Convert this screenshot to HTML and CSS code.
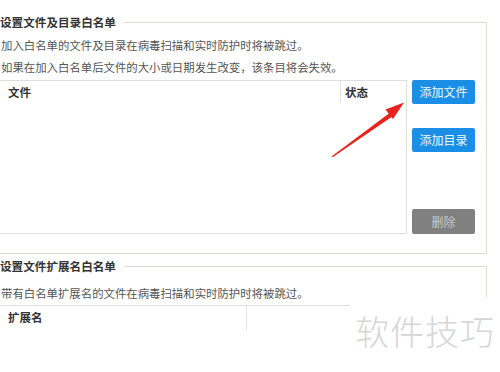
FILE: index.html
```html
<!DOCTYPE html>
<html lang="zh-CN">
<head>
<meta charset="utf-8">
<link rel="stylesheet" href="styles.css">
</head>
<body>
<div class="page">
  <fieldset class="group group-dirs">
    <legend class="legend">设置文件及目录白名单</legend>
    <p class="desc">加入白名单的文件及目录在病毒扫描和实时防护时将被跳过。</p>
    <p class="desc">如果在加入白名单后文件的大小或日期发生改变，该条目将会失效。</p>
    <div class="list-row">
      <div class="table table-dirs">
        <div class="thead">
          <div class="th th-file">文件</div>
          <div class="th th-state">状态</div>
        </div>
      </div>
      <div class="actions">
        <button class="btn btn-blue">添加文件</button>
        <button class="btn btn-blue">添加目录</button>
        <button class="btn btn-gray">删除</button>
      </div>
    </div>
  </fieldset>

  <fieldset class="group group-ext">
    <legend class="legend">设置文件扩展名白名单</legend>
    <p class="desc desc-ext">带有白名单扩展名的文件在病毒扫描和实时防护时将被跳过。</p>
    <div class="table table-ext">
      <div class="thead">
        <div class="th th-ext">扩展名</div>
        <div class="th th-rest"></div>
      </div>
    </div>
  </fieldset>

  <div class="watermark">软件技巧</div>

  <svg class="arrow" width="500" height="372" viewBox="0 0 500 372">
    <polygon points="331.5,156.5 333,157 393.4,115.8 390.6,112.2" fill="#e8221c"/>
    <polygon points="404,102.5 385.5,109.5 393,119" fill="#e8221c"/>
  </svg>
</div>
</body>
</html>
```

FILE: styles.css
```css
* { box-sizing: border-box; }

html, body {
  margin: 0;
  padding: 0;
  background: #ffffff;
}

body {
  font-family: "Noto Sans CJK SC", "Microsoft YaHei", sans-serif;
  color: #555;
  overflow: hidden;
}

.page {
  position: relative;
  width: 500px;
  height: 372px;
  overflow: hidden;
}

.group {
  margin: 0 13px 0 -10px;
  padding: 0;
  border: 1px solid #dcdcd6;
  min-width: 0;
}

.group-dirs {
  margin-top: 14px;
  padding-bottom: 19px;
}

.group-ext {
  margin-top: 4px;
  height: 160px;
}

.legend {
  margin-left: 9px;
  padding: 0 8px 0 0;
  font-size: 11.6px;
  line-height: 16px;
  font-weight: 700;
  color: #333;
}

.desc {
  margin: 0 0 0 10px;
  font-size: 11.4px;
  line-height: 22px;
  color: #555;
  white-space: nowrap;
}

.group-dirs .desc:first-of-type {
  margin-top: 4px;
}

.desc-ext {
  margin-top: 8px;
  line-height: 22px;
}

.list-row {
  display: flex;
  align-items: stretch;
  gap: 5px;
  margin-top: 2px;
}

.table {
  border: 1px solid #dedede;
  background: #fff;
}

.table-dirs {
  width: 416px;
  height: 154px;
}

.table-ext {
  width: 480px;
  height: 100px;
  margin-top: 1px;
}

.thead {
  display: flex;
  height: 22px;
}

.th {
  font-size: 11.5px;
  line-height: 22px;
  font-weight: 700;
  color: #333;
  padding-left: 16px;
}

.th-file {
  width: 349px;
  border-right: 1px solid #e3e3e3;
}

.th-state {
  padding-left: 4px;
}

.th-ext {
  width: 255px;
  height: 25px;
  border-right: 1px solid #e3e3e3;
}

.actions {
  display: flex;
  flex-direction: column;
  width: 64px;
}

.btn {
  height: 24px;
  width: 63px;
  margin-top: 0;
  padding: 0;
  border: none;
  border-radius: 2px;
  font-family: "Noto Sans CJK SC", sans-serif;
  font-size: 12px;
  line-height: 24px;
  text-align: center;
}

.btn-blue {
  background: #1b8fe6;
  color: #f2f8ff;
}

.btn-blue + .btn-blue {
  margin-top: 24px;
}

.btn-gray {
  margin-top: auto;
  height: 25px;
  background: #808080;
  color: #c9c9c9;
}

.watermark {
  position: absolute;
  left: 350px;
  top: 297px;
  right: 0;
  bottom: 0;
  background: #ffffff;
  padding: 14px 0 0 5px;
  font-size: 34px;
  line-height: 40px;
  font-weight: 200;
  color: #d6d6d6;
  letter-spacing: 1px;
}

.arrow {
  position: absolute;
  left: 0;
  top: 0;
  pointer-events: none;
}
```
